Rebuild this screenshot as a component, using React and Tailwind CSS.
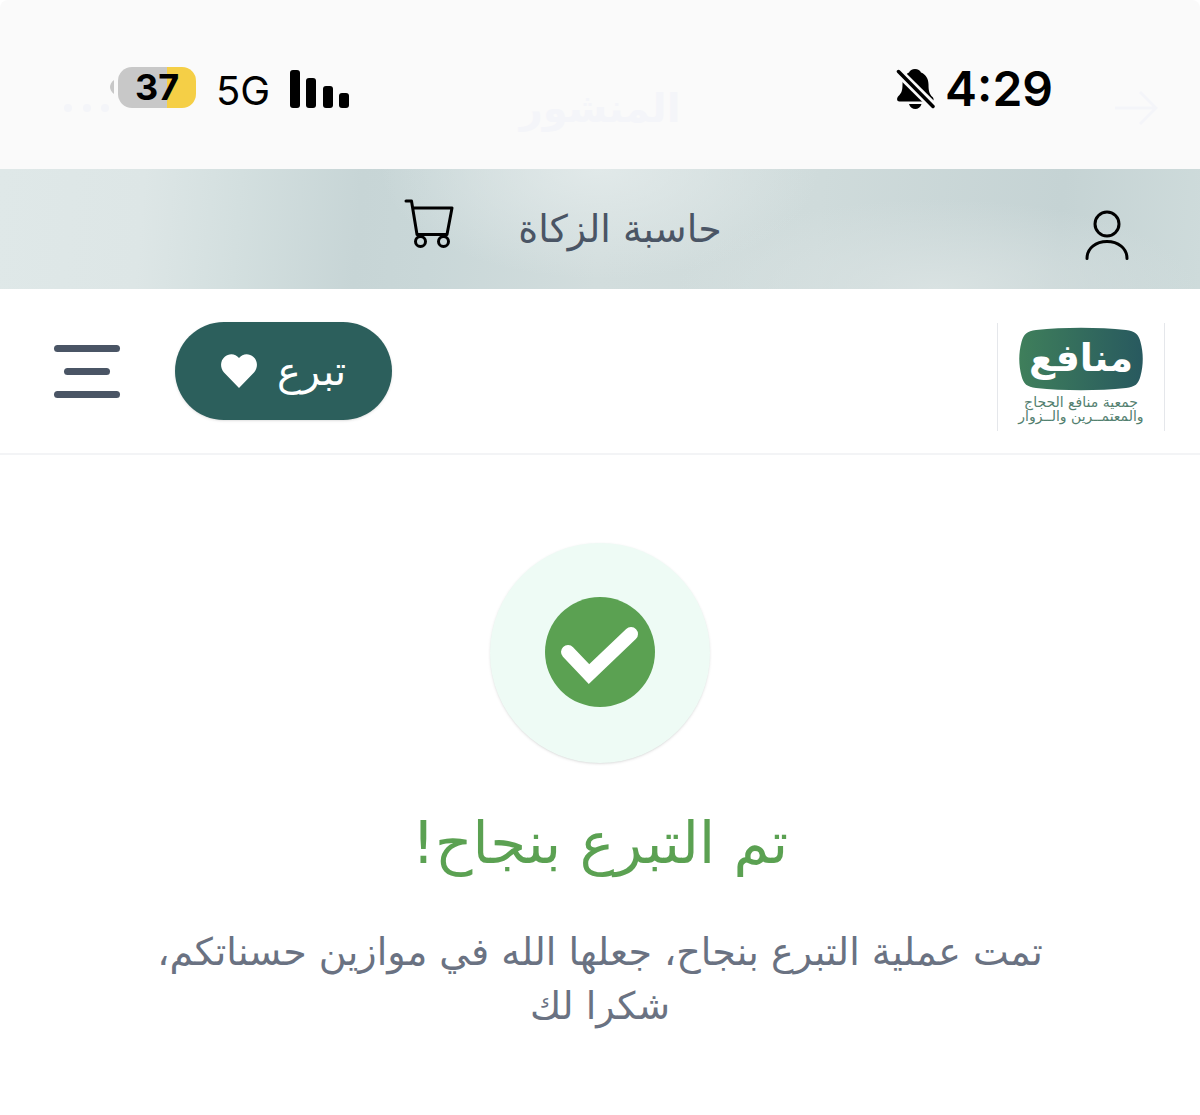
import React from 'react'

function BatteryIcon() {
  return (
    <div className="flex items-center gap-1 pb-1">
      <svg viewBox="0 0 4 14" className="h-[14px] w-1 fill-[#c8c8c8]" aria-hidden="true">
        <path d="M4 0v14C1.500 12 0 9.500 0 7s1.500-5 4-7z" />
      </svg>
      <div className="flex h-[41px] w-[78px] items-center justify-center rounded-[14px] bg-linear-to-l from-[#f5cf46] from-37% to-[#c8c8c8] to-37% text-[36px] leading-none font-bold">
        37
      </div>
    </div>
  )
}

function SignalIcon() {
  return (
    <svg viewBox="0 0 60 38" className="h-[38px] w-[60px]" aria-hidden="true">
      <rect x="0" y="0" width="10" height="38" rx="3" />
      <rect x="16" y="8" width="10" height="30" rx="3" />
      <rect x="33" y="16" width="10" height="22" rx="3" />
      <rect x="49" y="23" width="10" height="15" rx="3" />
    </svg>
  )
}

function BellOffIcon() {
  return (
    <svg viewBox="0 0 39 42" className="h-[42px] w-[39px]" aria-hidden="true">
      <path d="M19 1c3 0 5 1.500 6 3.500 5 2 7.500 6.500 7.500 12 0 7 1 9.500 4 12.500 1.500 1.500 1.500 4.500-.5 4.500H3.500C.5 33.500.5 30 2.500 28c3-3 4-5.500 4-11.500 0-6 2.500-10 6.500-12C14 2.500 16 1 19 1z" />
      <path d="M13 36h12.500c-1 3.300-3.500 5-6.200 5s-5.300-1.700-6.300-5z" />
      <path d="M1 2.500 37 38" stroke="#fafafa" strokeWidth="9" />
      <path d="M2.500 3.500 37 38.500" stroke="#000" strokeWidth="3.500" strokeLinecap="round" />
    </svg>
  )
}

function CartIcon() {
  return (
    <svg viewBox="0 0 50 50" className="size-[50px] fill-none stroke-black stroke-3" strokeLinecap="round" strokeLinejoin="round">
      <path d="M2 3h5.500L13 36.500H43L48 10H9" />
      <circle cx="16.500" cy="43.500" r="5" />
      <circle cx="39.500" cy="43.500" r="5" />
    </svg>
  )
}

function UserIcon() {
  return (
    <svg viewBox="0 0 44 50" className="h-[50px] w-11 fill-none stroke-black stroke-3" strokeLinecap="round">
      <circle cx="22" cy="14" r="12" />
      <path d="M2 48.500C2 38 11 31.500 22 31.500S42 38 42 48.500" />
    </svg>
  )
}

function Logo() {
  return (
    <a href="#" className="mt-3 flex h-[108px] w-[168px] flex-col items-center border-x border-gray-200 pt-1">
      <svg viewBox="0 0 124 64" className="h-16 w-[124px]">
        <defs>
          <linearGradient id="logo-fill">
            <stop offset="0" stopColor="#3f7f5b" />
            <stop offset="1" stopColor="#28595f" />
          </linearGradient>
        </defs>
        <path
          d="M17 3C45 0 79 0 107 3c9 1 12.500 4 14.500 12 3 11 3 23 0 34-2 8-5.500 11-14.500 12-28 3-62 3-90 0-9-1-12.500-4-14.500-12-3-11-3-23 0-34C4.500 7 8 4 17 3z"
          fill="url(#logo-fill)"
        />
        <text x="62" y="44" textAnchor="middle" className="fill-white text-[38px] font-bold">
          منافع
        </text>
      </svg>
      <span className="mt-1 text-[14px] leading-[14px] whitespace-nowrap text-[#53806f]">جمعية منافع الحجاج</span>
      <span className="text-[14px] leading-[14px] whitespace-nowrap text-[#53806f]">والمعتمــرين والــزوار</span>
    </a>
  )
}

function StatusBar() {
  return (
    <div dir="ltr" className="relative h-[169px] rounded-t-lg bg-[#fafafa] font-['Inter',sans-serif] text-black">
      {/* Faded page title behind the status icons */}
      <div className="absolute inset-x-0 top-[84px] grid h-12 grid-cols-[1fr_auto_1fr] items-center px-[62px] text-[#f4f5f9]">
        <svg viewBox="0 0 48 12" className="h-3 w-12 fill-current" aria-hidden="true">
          <circle cx="6" cy="6" r="4" />
          <circle cx="25" cy="6" r="4" />
          <circle cx="43" cy="6" r="4" />
        </svg>
        <span dir="rtl" className="font-['DejaVu_Sans',sans-serif] text-[40px] leading-none font-bold">المنشور</span>
        <svg viewBox="0 0 44 36" className="-mr-5 h-9 w-11 justify-self-end fill-none stroke-current stroke-3" aria-hidden="true">
          <path d="M1 18h40M26 2l16 16-16 16" />
        </svg>
      </div>
      <div className="relative flex items-center justify-between pt-[62px] pr-[147px] pl-[110px]">
        <div className="flex h-[54px] items-center gap-5">
          <BatteryIcon />
          <span className="pt-1 text-[40px] leading-none">5G</span>
          <SignalIcon />
        </div>
        <div className="flex h-[54px] items-center gap-[10px]">
          <BellOffIcon />
          <span className="text-[48px] leading-none font-semibold">4:29</span>
        </div>
      </div>
    </div>
  )
}

export default function App() {
  return (
    <div dir="rtl" className="min-h-screen bg-white font-['DejaVu_Sans',sans-serif]">
      <StatusBar />

      {/* Top links */}
      <nav className="grid h-[120px] grid-cols-[11fr_auto_9fr] items-center bg-[radial-gradient(220px_110px_at_50%_0%,#e1e9e9,transparent),radial-gradient(260px_90px_at_78%_100%,#d9e2e2,transparent),linear-gradient(95deg,#dfe8e8,#dde6e6_12%,#d3dfdf_20%,#c7d5d6_30%,#c9d7d8_36%,#d2dddd_50%,#cfdbdb_68%,#c5d3d4_88%,#cedbdb)] px-[71px]">
        <a href="#" aria-label="حسابي" className="mt-3 justify-self-start">
          <UserIcon />
        </a>
        <div className="flex items-center gap-16">
          <a href="#" className="text-[38px] text-gray-600">حاسبة الزكاة</a>
          <a href="#" aria-label="السلة" className="pb-3">
            <CartIcon />
          </a>
        </div>
      </nav>

      {/* Header */}
      <header className="flex h-[166px] items-center justify-between border-b-2 border-gray-100 pr-[35px] pl-[54px]">
        <Logo />
        <div className="flex items-center gap-[55px]">
          <button className="flex h-[98px] w-[217px] items-center justify-center gap-5 rounded-full bg-[#2c5f5c] text-[40px] text-white shadow-sm">
            تبرع
            <svg viewBox="0 0 36 34" className="h-[34px] w-9 fill-current" aria-hidden="true">
              <path d="M18 34 3 18.500C-1 14 -1 7 3.500 3 8-1.200 14.500-.6 18 4c3.500-4.600 10-5.200 14.500-1C37 7 37 14 33 18.500z" />
            </svg>
          </button>
          <button aria-label="القائمة" className="flex h-[53px] w-[66px] flex-col items-center justify-between">
            <span className="h-[7px] w-full rounded-full bg-gray-600" />
            <span className="h-[7px] w-[46px] rounded-full bg-gray-600" />
            <span className="h-[7px] w-full rounded-full bg-gray-600" />
          </button>
        </div>
      </header>

      {/* Success message */}
      <main className="flex flex-col items-center px-[150px] pt-[88px] text-center">
        <div className="flex size-[220px] items-center justify-center rounded-full bg-[#eefbf5] pb-[2px] shadow-sm">
          <svg viewBox="0 0 110 110" className="size-[110px]" aria-hidden="true">
            <circle cx="55" cy="55" r="55" fill="#5ba152" />
            <path d="M23 55l21 22 42-40" fill="none" stroke="#fff" strokeWidth="14" strokeLinecap="round" />
          </svg>
        </div>
        <h1 className="mt-10 text-[58px] leading-[80px] text-[#5ba152]">تم التبرع بنجاح!</h1>
        <p className="mt-[42px] text-[38px] leading-[54px] text-gray-500">
          تمت عملية التبرع بنجاح، جعلها الله في موازين حسناتكم، شكرا لك
        </p>
      </main>
    </div>
  )
}
